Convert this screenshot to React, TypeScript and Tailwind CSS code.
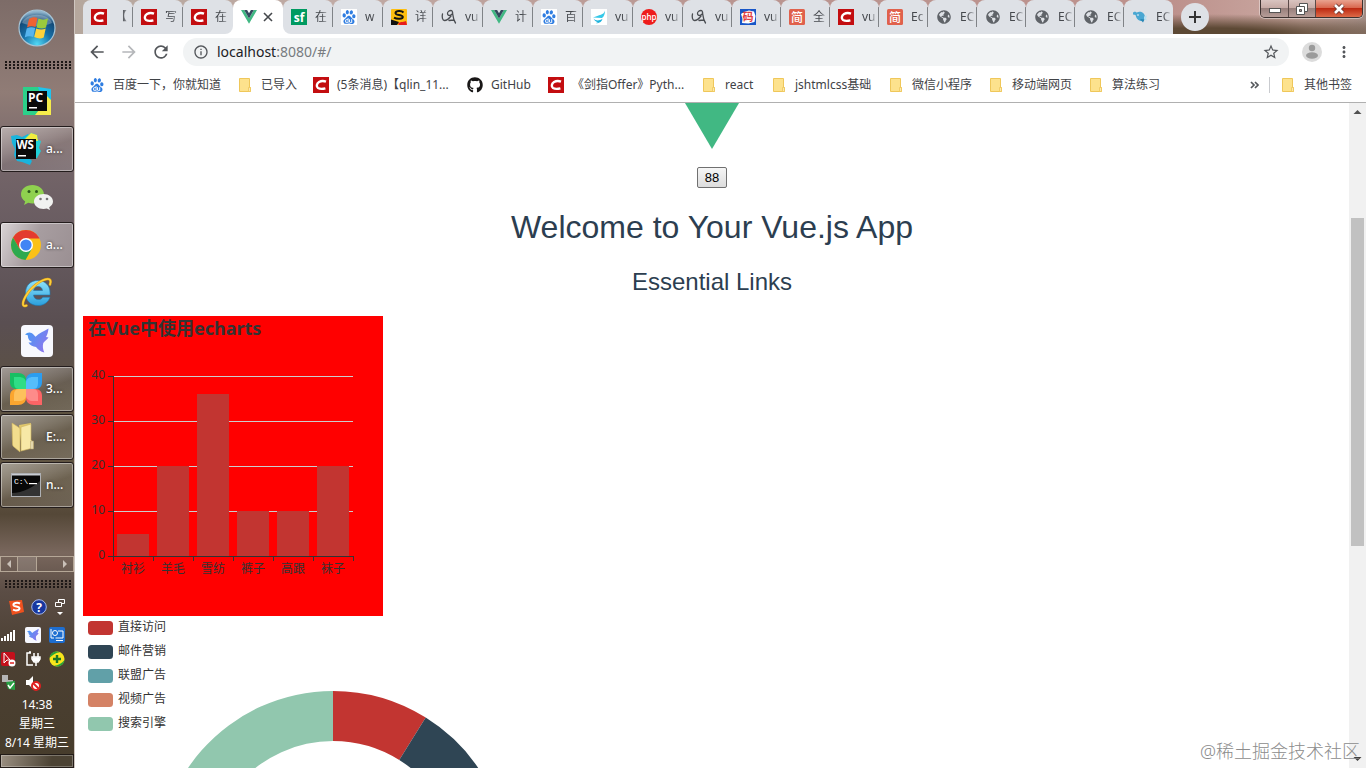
import type { ReactNode } from "react";
import { FaGithub, FaGlobeAmericas } from "react-icons/fa";
import { MdArrowBack, MdArrowForward, MdInfoOutline, MdMoreVert, MdRefresh, MdStarBorder } from "react-icons/md";
import { SiBaidu } from "react-icons/si";

/* ---------- favicons ---------- */

const CsdnIcon = () => (
  <svg viewBox="0 0 16 16" className="size-4 shrink-0">
    <rect width="16" height="16" fill="#c30d10" />
    <path d="M13 4.600C11 3.800 8 3.800 6 5 3.400 6.600 3.200 9.800 5 11c1.800 1 5 .9 7.400.3" fill="none" stroke="#fff" strokeWidth="2.400" />
  </svg>
);

const VueIcon = () => (
  <svg viewBox="0 0 16 16" className="size-4 shrink-0">
    <path d="M0 1h3.200L8 9.400 12.800 1H16L8 14.800z" fill="#41b883" />
    <path d="M3.200 1H6.100L8 4.200 9.900 1h2.900L8 9.400z" fill="#34495e" />
  </svg>
);

const BaiduIcon = () => <SiBaidu className="size-4 shrink-0 p-px text-[#2f7de1]" />;

const BaiduTabIcon = () => (
  <span className="size-4 shrink-0 bg-white p-px text-[#2f7de1]">
    <SiBaidu className="size-3.5" />
  </span>
);

const SfIcon = () => (
  <svg viewBox="0 0 16 16" className="size-4 shrink-0">
    <rect width="16" height="16" fill="#009a61" />
    <text x="8" y="13" textAnchor="middle" fontSize="12" fontWeight="700" fill="#fff" fontFamily="Open Sans, sans-serif">sf</text>
  </svg>
);

const SogouYellowIcon = () => (
  <svg viewBox="0 0 16 16" className="size-4 shrink-0">
    <rect width="16" height="16" rx="1" fill="#fdbe10" />
    <path d="M12.500 3.500C10.500 1.500 5 1.600 4.500 4c-.4 2.500 7.300 1.600 7.300 4 0 2.200-6 2.200-8.800.6" fill="none" stroke="#111" strokeWidth="2" />
    <path d="M0 10.500l8 2.500-2 3H0z" fill="#111" />
    <path d="M7 14.500c2-2 4-1 8-2.500l1 4H8z" fill="#e61c1c" />
  </svg>
);

const ScribbleIcon = () => (
  <svg viewBox="0 0 16 16" className="size-4 shrink-0" fill="none" stroke="#4a4d52" strokeWidth="1.300" strokeLinecap="round" strokeLinejoin="round">
    <path d="M1.500 5c-.8 3 0 6.500 2 6.500 2.500 0 5-2.500 6.500-4.500M10 1.500c-2 0-3.500 1.500-3.500 3s1.300 2.300 2.700 1.800S12 4.500 11.500 3 11 1.500 10 1.500zM11.500 3.500c.5 3 .5 7 3 10.500M8 11.500l5-.5" />
  </svg>
);

const WingIcon = () => (
  <svg viewBox="0 0 16 16" className="size-4 shrink-0">
    <rect width="16" height="16" fill="#fff" />
    <path d="M14 1.500C13 6 8 6 2 8.500l9 .5c2-1.500 3-4 3-7.500z" fill="#35c8e8" />
    <path d="M2.500 9.500c3 3 6 2 9 .3-.5 3-4 5-6.500 4.200l2-.8c-2-.4-3.500-1.500-4.500-3.700z" fill="#1db2dc" />
  </svg>
);

const PhpIcon = () => (
  <svg viewBox="0 0 16 16" className="size-4 shrink-0">
    <circle cx="8" cy="8" r="8" fill="#ee1c1c" />
    <text x="8" y="10.500" textAnchor="middle" fontSize="8" fontWeight="600" fill="#fff" fontFamily="Open Sans, sans-serif">php</text>
  </svg>
);

const MaIcon = () => (
  <svg viewBox="0 0 16 16" className="size-4 shrink-0">
    <rect width="16" height="16" fill="#1856c8" />
    <path d="M1 5l3-2 5-1.500 5 1 1.500 4.500-1 6-6 1.500L2 14l.5-4z" fill="#fff" />
    <text x="8" y="12" textAnchor="middle" fontSize="11" fontWeight="700" fill="#e0403f" fontFamily="Noto Sans CJK SC, sans-serif">码</text>
  </svg>
);

const JianIcon = () => (
  <svg viewBox="0 0 16 16" className="size-4 shrink-0">
    <rect width="16" height="16" rx="1.500" fill="#e0614c" />
    <text x="8" y="12.500" textAnchor="middle" fontSize="12" fontWeight="500" fill="#fff" fontFamily="Noto Sans CJK SC, sans-serif">简</text>
  </svg>
);

const GlobeIcon = () => <FaGlobeAmericas className="size-4 shrink-0 p-px text-[#5f6368]" />;

const WhaleIcon = () => (
  <svg viewBox="0 0 16 16" className="size-4 shrink-0">
    <path d="M1 3.500l2-1 1.500 1L6.500 3c4-.8 6.500 2.200 6.500 5.500 0 2-1 3.500-3 3.500-4 0-5.500-2.500-6.500-6L1 5.500z" fill="#4aa7d2" />
    <path d="M8 10l3 3.500 1.500-3z" fill="#2a86b4" />
    <path d="M12 7.500l3-1-1 3 1 2-3-1z" fill="#b8e0f0" />
    <circle cx="6" cy="6" r=".8" fill="#fff" />
  </svg>
);

const FolderIcon = () => (
  <svg viewBox="0 0 16 16" className="size-4 shrink-0">
    <path d="M2.500 1.500h10v9h1v4h-11z" fill="#fde28d" stroke="#efc75a" />
    <path d="M11.500 14.500v-4h2v4z" fill="#fbe9ae" stroke="#efc75a" strokeWidth=".8" />
  </svg>
);

/* ---------- taskbar icons ---------- */

const OrbIcon = () => (
  <svg viewBox="0 0 38 38" className="size-[38px]">
    <defs>
      <radialGradient id="orb" cx=".5" cy=".95" r=".9">
        <stop offset="0" stopColor="#52d9f5" />
        <stop offset=".45" stopColor="#1670a8" />
        <stop offset=".8" stopColor="#144a78" />
        <stop offset="1" stopColor="#8fb4cc" />
      </radialGradient>
    </defs>
    <circle cx="19" cy="19" r="18" fill="url(#orb)" stroke="#a6c4d6" strokeWidth="1.200" />
    <path d="M4 14C8 3 30 3 34 14c-8 4-20 4-30 0z" fill="#fff" opacity=".28" />
    <path d="M11 10c3-2 6-2 8.500-1l-2 9c-3-1-5.500-1-8.500.5z" fill="#ee6233" />
    <path d="M20.500 9.500c3 1.500 6 1.500 9.500 0l-2 9c-3 1.500-6 1-9.500 0z" fill="#9bcb3c" />
    <path d="M8.700 19.500c3-1.500 5.500-1.500 8.500-.5l-2 9c-3-1-5.500-1-8.500.5z" fill="#57b4ee" />
    <path d="M18.200 19.500c3 1 6 1.500 9.500 0l-2 9c-3 1.500-6 1-9.500-.5z" fill="#fdd23c" />
  </svg>
);

const PyCharmIcon = () => (
  <svg viewBox="0 0 28 28" className="size-7">
    <path d="M0 0h16L28 8v6L14 28H0z" fill="#2bd08a" />
    <path d="M15 0l13 2v12l-9-2z" fill="#1fc3ee" />
    <path d="M23 8l5 5v15H12l4-5z" fill="#f5ec4b" />
    <rect x="4" y="4" width="20" height="20" fill="#0a0a0a" />
    <text x="5" y="15" fontSize="12" fontWeight="700" fill="#fff" fontFamily="Open Sans, sans-serif">PC</text>
    <rect x="6" y="20" width="8" height="1.500" fill="#fff" />
  </svg>
);

const WebStormIcon = () => (
  <svg viewBox="0 0 32 32" className="size-8">
    <path d="M1 3l6-1 5 2 6-3 2 6v19l2 2-2 4-8-3-5-1-3-6 1-6-3-6z" fill="#19b4dc" />
    <path d="M14 5l7-5 6 2 1 5 3 1-2 7 2 3-4 7-6 1z" fill="#1fd0d8" />
    <path d="M15 6l6-6 6 2 1 6z" fill="#f2ec3f" />
    <rect x="6" y="6" width="20" height="20" fill="#0a0a0a" />
    <text x="6.500" y="16" fontSize="11.500" fontWeight="700" fill="#fff" fontFamily="Open Sans, sans-serif">WS</text>
    <rect x="8" y="22" width="8" height="1.500" fill="#fff" />
  </svg>
);

const WeChatIcon = () => (
  <svg viewBox="0 0 32 26" className="h-[26px] w-8">
    <path d="M11.500 1C5 1 0 5 0 10.300c0 3 1.600 5.500 4.200 7.200L3 21l4.200-2.200c1.400.4 2.800.6 4.300.6 6 0 11.500-3.600 11.500-9S17.500 1 11.500 1z" fill="#8fd14f" />
    <circle cx="8" cy="7.500" r="1.500" fill="#2c5a1c" />
    <circle cx="15.500" cy="7.500" r="1.500" fill="#2c5a1c" />
    <path d="M22.500 10c-5.300 0-9.500 3.200-9.500 7.500s4.200 7.500 9.500 7.500c1.200 0 2.300-.2 3.300-.5L29 26l-.8-2.800c2.300-1.400 3.800-3.400 3.800-5.700 0-4.300-4.200-7.500-9.500-7.500z" fill="#f1f2f0" />
    <circle cx="19.500" cy="15" r="1.300" fill="#777" />
    <circle cx="26" cy="15" r="1.300" fill="#777" />
  </svg>
);

const ChromeIcon = () => (
  <svg viewBox="0 0 32 32" className="size-8">
    <circle cx="16" cy="16" r="15" fill="#fbc116" />
    <path d="M3 8.500A15 15 0 0 1 29 8.500L29.500 9.500H16v13L9.500 19.800z" fill="#e33b2e" />
    <path d="M3 8.500A15 15 0 0 0 15.500 31L22 19.500H9.400z" fill="#2da94f" />
    <circle cx="16" cy="16" r="7" fill="#fff" />
    <circle cx="16" cy="16" r="5.600" fill="#4285f4" />
  </svg>
);

const IeIcon = () => (
  <svg viewBox="0 0 32 32" className="size-8">
    <defs>
      <linearGradient id="ie" x1="0" y1="0" x2="0" y2="1">
        <stop offset="0" stopColor="#8fe2fb" />
        <stop offset="1" stopColor="#2ba0dd" />
      </linearGradient>
    </defs>
    <path
      fillRule="evenodd"
      d="M17 3.500c7 0 12 5 12 12v2.500H12.500c.3 3 2.300 4.500 5 4.500 2 0 3.500-.8 4.300-2.300H29c-1.700 5-6 8.300-12 8.300-7.500 0-12.500-5-12.500-12.500s5-12.500 12.500-12.500zM12.600 13.500h8.900c-.4-2.700-2-4-4.400-4s-4.100 1.300-4.500 4z"
      fill="url(#ie)"
      stroke="#1b78b4"
      strokeWidth=".6"
    />
    <path d="M5.500 28.500C1 30.500 1 26 4.500 19.500 9.500 10.500 20 2.500 26.500 2c3-.2 3.800 2 2.500 5.500" fill="none" stroke="#d99a12" strokeWidth="2.600" strokeLinecap="round" />
    <path d="M5.500 28.500C1 30.500 1 26 4.500 19.500 9.500 10.500 20 2.500 26.500 2c3-.2 3.800 2 2.500 5.500" fill="none" stroke="#fdd03c" strokeWidth="1.600" strokeLinecap="round" />
  </svg>
);

const Bird = ({ className }: { className: string }) => (
  <svg viewBox="0 0 32 32" className={className}>
    <defs>
      <linearGradient id="bird" x1="0" y1="0" x2="1" y2=".6">
        <stop offset="0" stopColor="#3f9bf5" />
        <stop offset="1" stopColor="#8a78ee" />
      </linearGradient>
    </defs>
    <rect width="32" height="32" rx="4" fill="#f7f8fe" />
    <path d="M4 9.500C6 7.500 8.500 6.800 10.500 8c1.800 1 2.700 2.500 4 3.800C18 8 23 6.500 27.500 3.500c-.3 3-1 6-2.500 8.500l2.500.5c-1.500 2-3.500 3.500-5.200 5.500-.8 3-.5 6 1 9.500-3.500-1-6-2.500-8.300-5.500-3-.5-5.800-1.500-7.500-4.500 1.500.2 2.500 0 3.500-.5C7.500 15.500 7 13 6.800 10.300z" fill="url(#bird)" />
  </svg>
);

const CloverIcon = () => (
  <svg viewBox="0 0 32 32" className="size-8">
    <path d="M16 16H7C2 16 0 13 0 9V0h8c5 0 8 3 8 7z" fill="#16bf63" />
    <path d="M16 16V7c0-4 3-7 8-7h8v9c0 4-2 7-7 7z" fill="#2b9df0" />
    <path d="M16 16v9c0 4-3 7-8 7H0v-9c0-4 2-7 7-7z" fill="#fba52e" />
    <path d="M16 16h9c5 0 7 3 7 7v9h-8c-5 0-8-3-8-7z" fill="#fb6465" />
    <path d="M16 16H9c-4 0-5-3-5-6V4h5c4 0 7 2 7 6z" fill="#2fdd86" />
    <path d="M16 16v-6c0-4 3-6 7-6h5v6c0 3-1 6-5 6z" fill="#55bdfb" />
    <path d="M16 16v6c0 4-3 6-7 6H4v-6c0-3 1-6 5-6z" fill="#fdc15c" />
    <path d="M16 16h7c4 0 5 3 5 6v6h-5c-4 0-7-2-7-6z" fill="#fd8b8a" />
  </svg>
);

const ExplorerIcon = () => (
  <svg viewBox="0 0 32 32" className="size-8">
    <path d="M9 4l12-2v24l-9 3z" fill="#e0c76c" />
    <path d="M11 6l10-3v16l2 2v6l-12 3z" fill="#f7e8a6" stroke="#cdb25c" strokeWidth=".6" />
    <path d="M2 2l7 4.500c.6.400 1 1 1 2V31l-6-5c-1-.8-1.400-1.500-1.500-3z" fill="#f2dd8d" stroke="#cdb25c" strokeWidth=".6" />
    <path d="M20.500 20h3v8h-3z" fill="#e4d7ab" stroke="#b7a36a" strokeWidth=".5" />
  </svg>
);

const CmdIcon = () => (
  <svg viewBox="0 0 30 24" className="h-6 w-[30px]">
    <rect x=".5" y=".5" width="29" height="23" fill="#080808" stroke="#aeb0b4" />
    <rect x="1" y="1" width="28" height="1.500" fill="#c9ccd2" />
    <path d="M1 20C12 20 22 14 29 8v15H1z" fill="#333" />
    <text x="3" y="11" fontSize="8" fill="#fff" fontFamily="Liberation Mono, monospace">C:\</text>
    <rect x="18" y="10" width="8" height="1.200" fill="#fff" />
  </svg>
);

/* ---------- taskbar ---------- */

const Grip = () => (
  <div className="ml-[5px] h-[9px] w-[67px] shrink-0 bg-[radial-gradient(circle_at_1px_1px,#1d1716_1px,transparent_1px)] bg-[length:4px_3px]" />
);

type Task = { name: string; icon: ReactNode; label?: string; active?: boolean };

const tasks: Task[] = [
  { name: "PyCharm", icon: <PyCharmIcon /> },
  { name: "WebStorm", icon: <WebStormIcon />, label: "a..." },
  { name: "WeChat", icon: <WeChatIcon /> },
  { name: "Chrome", icon: <ChromeIcon />, label: "a...", active: true },
  { name: "Internet Explorer", icon: <IeIcon /> },
  { name: "Thunder", icon: <Bird className="size-8" /> },
  { name: "360", icon: <CloverIcon />, label: "3..." },
  { name: "Explorer", icon: <ExplorerIcon />, label: "E:..." },
  { name: "Command prompt", icon: <CmdIcon />, label: "n..." },
];

const TaskButton = ({ task }: { task: Task }) => {
  if (!task.label) {
    return (
      <button aria-label={task.name} className="flex h-12 w-full items-center justify-center">
        {task.icon}
      </button>
    );
  }
  return (
    <div className="h-12 py-px">
      <button
        aria-label={task.name}
        className={
          "flex h-[46px] w-[74px] items-center rounded-[3px] border border-[#231c1c] pl-[9px] text-[12px] font-medium text-white shadow-[inset_0_0_0_1px_#ffffff66] " +
          (task.active
            ? "bg-[linear-gradient(115deg,#dad4d6_0%,#a79da0_45%,#9a8f92_100%)]"
            : "bg-[linear-gradient(160deg,#ffffff70_0%,#ffffff30_40%,#ffffff14_55%,#ffffff22_100%)]")
        }
      >
        <span className="flex w-8 shrink-0 justify-center">{task.icon}</span>
        <span className="pl-1 [text-shadow:0_0_3px_#222]">{task.label}</span>
      </button>
    </div>
  );
};

const Tray = () => (
  <div className="flex flex-col gap-2 pt-[10px]">
    <div className="flex h-5 items-start gap-[7px] pl-2">
      <svg viewBox="0 0 16 16" className="size-4">
        <path d="M1 2l13-1 2 12-12 3z" fill="#f0511e" />
        <path d="M12 4.500C9 3 5 4 5.500 6.200c.5 1.800 6 .8 6 3.200 0 2-4 2.600-6.500 1.300" fill="none" stroke="#fff" strokeWidth="2" />
      </svg>
      <svg viewBox="0 0 16 16" className="size-4">
        <circle cx="8" cy="8" r="7.300" fill="#1737a0" stroke="#a5b8ea" />
        <text x="8" y="12.500" textAnchor="middle" fontSize="12" fontWeight="700" fill="#fff" fontFamily="Open Sans, sans-serif">?</text>
      </svg>
      <svg viewBox="0 0 12 18" className="h-[18px] w-3" fill="none" stroke="#fff">
        <path d="M4.500 3V.5h6v4H8M1.500 3.500h6v4h-6z" />
        <path d="M3 13h6l-3 3z" fill="#fff" stroke="none" />
      </svg>
    </div>
    <div className="flex h-4 items-center gap-2 pl-px">
      <svg viewBox="0 0 16 16" className="size-4" fill="#fff">
        <path d="M0 11h2v3H0zM3 9h2v5H3zM6 7h2v7H6zM9 5h2v9H9zM12 3h2v11h-2z" />
      </svg>
      <Bird className="size-4" />
      <svg viewBox="0 0 16 16" className="size-4" fill="none" stroke="#fff">
        <rect width="16" height="16" rx="2" fill="#1e6ed0" stroke="none" />
        <path d="M2 2v9h3M9 4h5v7H6.500M7 13.500h7" />
        <circle cx="6" cy="6" r="2.500" />
      </svg>
    </div>
    <div className="flex h-4 items-center gap-2 pl-px">
      <svg viewBox="0 0 16 16" className="size-4">
        <rect width="14" height="14" y="1" rx="2" fill="#c3101b" />
        <path d="M3 2l6 7-3 0-3 3z" fill="none" stroke="#fff" />
        <circle cx="11" cy="12" r="3.500" fill="#fff" />
        <path d="M9 12h4" stroke="#d22" strokeWidth="1.500" />
      </svg>
      <svg viewBox="0 0 16 16" className="size-4" fill="none" stroke="#fff" strokeWidth="1.500">
        <path d="M6 2H2v12h6M4 1h2M9 2v4M13 2v4M7 6h8v2l-2 3h-4L7 8zM11 11v4" />
        <path d="M8 7h6v2l-2 1h-3z" fill="#fff" />
      </svg>
      <svg viewBox="0 0 16 16" className="size-4">
        <circle cx="8" cy="8" r="7.500" fill="#f8e51b" />
        <path d="M.5 7C1 2 6-1 11 1.200 7 1.500 3 4 .5 7zM15.500 9c-.5 5-5.500 8-10.500 5.800C9 14.500 13 12 15.500 9z" fill="#2ba43a" />
        <path d="M8 4v8M4 8h8" stroke="#1c7626" strokeWidth="2.400" />
      </svg>
    </div>
    <div className="flex h-4 items-center gap-2 pl-px">
      <svg viewBox="0 0 16 16" className="size-4">
        <path d="M1 0h6v7H1zM7 5h5v4H7z" fill="#b5b5b5" />
        <path d="M5 7l9-1v9l-7-1z" fill="#27a043" />
        <path d="M7 10l2 3 4-5" fill="none" stroke="#fff" strokeWidth="1.500" />
      </svg>
      <svg viewBox="0 0 16 16" className="size-4">
        <path d="M1 5h3l4-4v13l-4-4H1z" fill="#fff" />
        <circle cx="11" cy="11" r="4" fill="#fff" stroke="#df2020" strokeWidth="2" />
        <path d="M8 8l6 6" stroke="#df2020" strokeWidth="2" />
      </svg>
    </div>
  </div>
);

const Taskbar = () => (
  <aside className="flex w-[75px] shrink-0 flex-col border-r border-[#cfc6c0] bg-[linear-gradient(to_bottom,#7d6c68_0%,#907c76_12%,#736468_22%,#665a5f_32%,#5a4f52_42%,#5c5140_52%,#625643_62%,#554838_67%,#79675d_72%,#5b4d45_77%,#4c4033_85%,#463c2b_100%)]">
    <button aria-label="Start" className="flex h-14 shrink-0 items-center justify-center">
      <OrbIcon />
    </button>
    <div className="pt-[5px] pb-[7px]">
      <Grip />
    </div>
    <nav className="flex flex-col">
      {tasks.map((t) => (
        <TaskButton key={t.name} task={t} />
      ))}
    </nav>
    <div className="min-h-4 flex-1" />
    <div className="flex h-4 shrink-0 border border-[#b5a797] text-[#c9c0b8]">
      <button aria-label="Scroll left" className="flex w-4 items-center justify-center">
        <svg viewBox="0 0 6 8" className="h-2 w-1.5" fill="currentColor"><path d="M5 0v8L1 4z" /></svg>
      </button>
      <div className="w-5 border-x border-[#b5a797] bg-[#ffffff22]" />
      <button aria-label="Scroll right" className="ml-auto flex w-4 items-center justify-center">
        <svg viewBox="0 0 6 8" className="h-2 w-1.5" fill="currentColor"><path d="M1 0v8l4-4z" /></svg>
      </button>
    </div>
    <div className="pt-2">
      <Grip />
    </div>
    <Tray />
    <div className="flex flex-col items-center pt-1 text-[12px] leading-[19px] whitespace-nowrap text-white">
      <span>14:38</span>
      <span>星期三</span>
      <span>8/14 星期三</span>
    </div>
    <button aria-label="Show desktop" className="mt-0.5 h-[14px] shrink-0 border border-[#231c18] bg-[linear-gradient(100deg,#9b9082,#4c4334_70%)] shadow-[inset_0_0_0_1px_#ffffff44]" />
  </aside>
);

/* ---------- browser chrome ---------- */

const tabs: { title: string; icon: ReactNode }[] = [
  { title: "【", icon: <CsdnIcon /> },
  { title: "写", icon: <CsdnIcon /> },
  { title: "在", icon: <CsdnIcon /> },
  { title: "", icon: <VueIcon /> },
  { title: "在", icon: <SfIcon /> },
  { title: "w", icon: <BaiduTabIcon /> },
  { title: "详", icon: <SogouYellowIcon /> },
  { title: "vu", icon: <ScribbleIcon /> },
  { title: "计", icon: <VueIcon /> },
  { title: "百", icon: <BaiduTabIcon /> },
  { title: "vu", icon: <WingIcon /> },
  { title: "vu", icon: <PhpIcon /> },
  { title: "vu", icon: <ScribbleIcon /> },
  { title: "vu", icon: <MaIcon /> },
  { title: "全", icon: <JianIcon /> },
  { title: "vu", icon: <CsdnIcon /> },
  { title: "Ec", icon: <JianIcon /> },
  { title: "EC", icon: <GlobeIcon /> },
  { title: "EC", icon: <GlobeIcon /> },
  { title: "EC", icon: <GlobeIcon /> },
  { title: "EC", icon: <GlobeIcon /> },
  { title: "EC", icon: <WhaleIcon /> },
];

const ACTIVE = 3;

const tabShape = (i: number) => {
  if (i === ACTIVE) return "rounded-t-lg bg-white";
  if (i === ACTIVE - 1) return "rounded-t-lg rounded-br-lg bg-[#dee1e6]";
  if (i === ACTIVE + 1) return "rounded-t-lg rounded-bl-lg bg-[#dee1e6]";
  return "rounded-t-lg bg-[#dee1e6]";
};

const TabStrip = () => (
  <div className="flex h-[34px] shrink-0 items-start bg-[radial-gradient(ellipse_240px_20px_at_1130px_34px,#5d4935_30%,transparent),linear-gradient(to_right,#b5a79d_0,#c0aaa4_20%,#b99590_50%,#bd918c_85%,#caa9a2_95%,#a08a82_100%)] pl-2">
    <ul className="flex">
      {tabs.map((t, i) => (
        <li
          key={i}
          className={
            (i < 12 ? "w-[50px] " : "w-[49px] ") +
            (Math.abs(i - ACTIVE) === 1 ? "bg-[linear-gradient(to_bottom,transparent_50%,white_50%)]" : "")
          }
        >
          <a href="#/" className={"flex h-[34px] items-center overflow-hidden pl-2 " + tabShape(i)}>
            {t.icon}
            {i === ACTIVE ? (
              <svg viewBox="0 0 10 10" className="ml-[6px] size-[10px]" stroke="#45484c" strokeWidth="1.600">
                <path d="M1 1l8 8M9 1L1 9" />
              </svg>
            ) : (
              <span className="ml-2 w-[14px] shrink-0 overflow-hidden text-[12px] whitespace-nowrap text-[#45484d] [mask-image:linear-gradient(to_right,black_50%,#0003)]">
                {t.title}
              </span>
            )}
            {i !== ACTIVE && i !== ACTIVE - 1 && i !== tabs.length - 1 && (
              <span className="ml-auto h-5 w-px bg-[#808387]" />
            )}
          </a>
        </li>
      ))}
    </ul>
    <button aria-label="New tab" className="mt-[3px] ml-2 flex size-7 items-center justify-center rounded-full bg-[#dee1e6]">
      <svg viewBox="0 0 12 12" className="size-3" stroke="#333" strokeWidth="2"><path d="M6 0v12M0 6h12" /></svg>
    </button>
    <div className="mr-[3px] ml-auto flex h-[18px] overflow-hidden rounded-b-[5px] border border-t-0 border-[#3d3230] shadow-[0_0_0_1px_#ffffff66]">
      <button aria-label="Minimize" className="flex w-7 items-center justify-center border-r border-[#5b4a48] bg-[linear-gradient(#d9c4c0_0%,#c7aba6_45%,#98807c_50%,#b79d98_100%)]">
        <svg viewBox="0 0 12 5" className="mt-1 h-[5px] w-3"><rect x=".5" y=".5" width="11" height="4" fill="#fff" stroke="#555" /></svg>
      </button>
      <button aria-label="Restore" className="flex w-[27px] items-center justify-center border-r border-[#5b4a48] bg-[linear-gradient(#d9c4c0_0%,#c7aba6_45%,#98807c_50%,#b79d98_100%)]">
        <svg viewBox="0 0 12 12" className="size-3" fill="#fff" stroke="#555">
          <path d="M3.500.5h8v8h-8z" />
          <path d="M.5 3.500h8v8h-8z" />
          <path d="M3.500 6.500h2v2h-2z" fill="#a58f8b" />
        </svg>
      </button>
      <button aria-label="Close" className="flex w-[46px] items-center justify-center bg-[linear-gradient(#e9a28f_0%,#d9684f_45%,#bd2a12_50%,#dd6a48_100%)]">
        <svg viewBox="0 0 12 12" className="size-3">
          <path d="M2 2l8 8M10 2l-8 8" stroke="#6a3530" strokeWidth="4.400" />
          <path d="M2 2l8 8M10 2l-8 8" stroke="#fff" strokeWidth="2.600" />
        </svg>
      </button>
    </div>
  </div>
);

const AddressRow = () => (
  <div className="flex h-9 shrink-0 items-center bg-white pl-3 text-[#54575b]">
    <button aria-label="Back"><MdArrowBack className="size-5" /></button>
    <button aria-label="Forward" className="ml-3 text-[#b5b7ba]"><MdArrowForward className="size-5" /></button>
    <button aria-label="Reload" className="ml-3"><MdRefresh className="size-5" /></button>
    <div className="ml-3 flex h-7 flex-1 items-center rounded-full bg-[#f1f3f4] pr-[9px] pl-[10px]">
      <MdInfoOutline className="size-4" />
      <a href="#/" className="ml-2 text-[14px] leading-5 text-[#202124]">
        localhost<span className="text-[#777b80]">:8080/#/</span>
      </a>
      <button aria-label="Bookmark" className="ml-auto"><MdStarBorder className="size-[18px]" /></button>
    </div>
    <button aria-label="Profile" className="ml-[13px]">
      <svg viewBox="0 0 20 20" className="size-5">
        <circle cx="10" cy="10" r="10" fill="#dcdcdc" />
        <circle cx="10" cy="6" r="3.200" fill="#9b9b9b" />
        <ellipse cx="10" cy="13.500" rx="6" ry="3.200" fill="#9b9b9b" />
      </svg>
    </button>
    <button aria-label="Menu" className="mr-[13px] ml-[13px]"><MdMoreVert className="size-[18px]" /></button>
  </div>
);

const bookmarks: { title: string; icon: ReactNode; width: string }[] = [
  { title: "百度一下，你就知道", icon: <BaiduIcon />, width: "w-[108px]" },
  { title: "已导入", icon: <FolderIcon />, width: "w-9" },
  { title: "(5条消息)【qlin_11...", icon: <CsdnIcon />, width: "w-[114px]" },
  { title: "GitHub", icon: <FaGithub className="size-4 shrink-0 text-[#191717]" />, width: "w-[41px]" },
  { title: "《剑指Offer》Pyth...", icon: <CsdnIcon />, width: "w-[113px]" },
  { title: "react", icon: <FolderIcon />, width: "w-[30px]" },
  { title: "jshtmlcss基础", icon: <FolderIcon />, width: "w-[77px]" },
  { title: "微信小程序", icon: <FolderIcon />, width: "w-[60px]" },
  { title: "移动端网页", icon: <FolderIcon />, width: "w-[60px]" },
  { title: "算法练习", icon: <FolderIcon />, width: "w-12" },
];

const BookmarkRow = () => (
  <div className="flex h-[33px] shrink-0 items-center gap-4 border-b border-[#b0b0b0] bg-white pb-[3px] pl-[14px] text-[12px] whitespace-nowrap text-[#3f4246]">
    {bookmarks.map((b) => (
      <a key={b.title} href="#/" className="flex items-center gap-2">
        {b.icon}
        <span className={b.width}>{b.title}</span>
      </a>
    ))}
    <div className="mr-[14px] ml-auto flex items-center">
      <button aria-label="More bookmarks">
        <svg viewBox="0 0 9 8" className="h-2 w-[9px]" fill="none" stroke="#55585c" strokeWidth="1.700">
          <path d="M1 1l3 3-3 3M5 1l3 3-3 3" />
        </svg>
      </button>
      <span className="mr-[10px] ml-[10px] h-4 w-px bg-[#c9cbcf]" />
      <a href="#/" className="flex items-center gap-2">
        <FolderIcon />
        其他书签
      </a>
    </div>
  </div>
);

/* ---------- page ---------- */

const sales = [
  { name: "衬衫", value: 5 },
  { name: "羊毛", value: 20 },
  { name: "雪纺", value: 36 },
  { name: "裤子", value: 10 },
  { name: "高跟", value: 10 },
  { name: "袜子", value: 20 },
];

const BarChart = () => (
  <svg viewBox="0 0 300 300" className="block size-[300px] bg-[#ff0000] text-[12px]" fill="#333">
    <text x="5" y="19" fontSize="18" fontWeight="700">在Vue中使用echarts</text>
    <g shapeRendering="crispEdges">
      {[10, 20, 30, 40].map((v) => (
        <rect key={v} x="30" y={240 - v * 4.5} width="240" height="1" fill="#ccc" />
      ))}
      {sales.map((s, i) => (
        <rect key={s.name} x={34 + i * 40} y={240 - s.value * 4.5} width="32" height={s.value * 4.5} fill="#c23531" />
      ))}
      <rect x="30" y="60" width="1" height="181" />
      <rect x="30" y="240" width="241" height="1" />
      {[0, 10, 20, 30, 40].map((v) => (
        <rect key={v} x="25" y={240 - v * 4.5} width="5" height="1" />
      ))}
      {[0, 1, 2, 3, 4, 5, 6].map((i) => (
        <rect key={i} x={30 + i * 40} y="240" width="1" height="5" />
      ))}
    </g>
    {[0, 10, 20, 30, 40].map((v) => (
      <text key={v} x="22" y={243 - v * 4.5} textAnchor="end">{v}</text>
    ))}
    {sales.map((s, i) => (
      <text key={s.name} x={50 + i * 40} y="257" textAnchor="middle">{s.name}</text>
    ))}
  </svg>
);

const slices = [
  { name: "直接访问", color: "#c23531", from: 0, to: 32 },
  { name: "邮件营销", color: "#2f4554", from: 32, to: 69 },
  { name: "联盟广告", color: "#61a0a8", from: 69, to: 111 },
  { name: "视频广告", color: "#d48265", from: 111, to: 165 },
  { name: "搜索引擎", color: "#91c7ae", from: 165, to: 360 },
];

const point = (r: number, deg: number) => {
  const a = (deg * Math.PI) / 180;
  return `${250 + r * Math.sin(a)} ${250 - r * Math.cos(a)}`;
};

const ring = (from: number, to: number) => {
  const large = to - from > 180 ? 1 : 0;
  return `M${point(175, from)}A175 175 0 ${large} 1 ${point(175, to)}L${point(125, to)}A125 125 0 ${large} 0 ${point(125, from)}Z`;
};

const DonutChart = () => (
  <svg viewBox="0 0 500 500" className="block size-[500px] text-[12px]" fill="#333">
    {slices.map((s, i) => (
      <g key={s.name}>
        <path d={ring(s.from, s.to)} fill={s.color} />
        <rect x="5" y={5 + i * 24} width="25" height="14" rx="3.500" fill={s.color} />
        <text x="35" y={15 + i * 24}>{s.name}</text>
      </g>
    ))}
  </svg>
);

const Page = () => (
  <main className="min-w-0 flex-1 overflow-hidden bg-white px-2 text-[#2c3e50]">
    <div className="flex flex-col items-center font-['Liberation_Sans',Arial,sans-serif]">
      <svg viewBox="0 0 54 46" className="h-[46px] w-[54px]"><path d="M0 0h54L27 46z" fill="#41b883" /></svg>
      <button className="mt-[18px] h-[21px] rounded-[2px] border border-[#707070] bg-linear-to-b from-[#f6f6f6] to-[#dddddd] px-[7px] text-[13px] leading-[19px] text-black">
        88
      </button>
      <h1 className="mt-5 text-[32px] leading-[38px]">Welcome to Your Vue.js App</h1>
      <h2 className="mt-5 mb-[18px] text-[24px] leading-8">Essential Links</h2>
    </div>
    <BarChart />
    <DonutChart />
  </main>
);

const Scrollbar = () => (
  <div className="flex w-[17px] shrink-0 flex-col items-center bg-[#f1f1f1]">
    <svg viewBox="0 0 17 17" className="size-[17px]"><path d="M4.500 11h8l-4-4z" fill="#505050" /></svg>
    <div className="mt-[98px] h-[328px] w-[13px] bg-[#c1c1c1]" />
    <svg viewBox="0 0 17 17" className="mt-auto size-[17px]"><path d="M4.500 6h8l-4 4z" fill="#404040" /></svg>
  </div>
);

export default function App() {
  return (
    <div className="relative flex h-screen overflow-hidden font-['Noto_Sans','Noto_Sans_CJK_SC',sans-serif]">
      <Taskbar />
      <div className="flex min-w-0 flex-1 flex-col">
        <TabStrip />
        <AddressRow />
        <BookmarkRow />
        <div className="flex min-h-0 flex-1">
          <Page />
          <Scrollbar />
        </div>
      </div>
      <div className="pointer-events-none absolute right-[6px] bottom-1 text-[18px] leading-[26px] font-light text-[#8c8c8c]">
        @稀土掘金技术社区
      </div>
    </div>
  );
}
